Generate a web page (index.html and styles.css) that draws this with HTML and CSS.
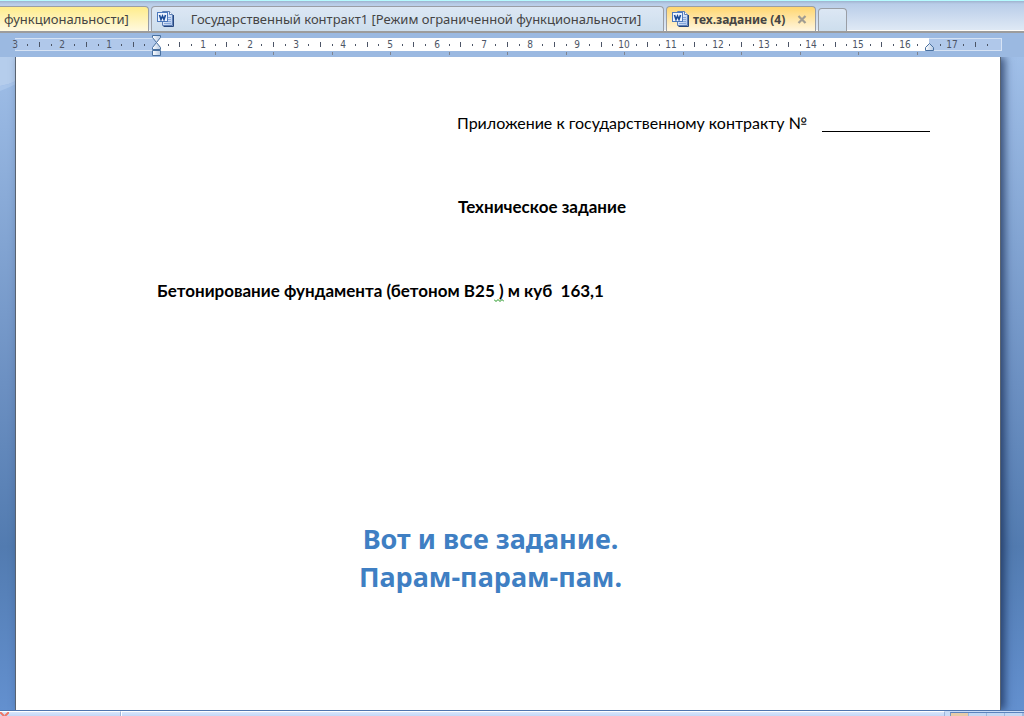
FILE: index.html
```html
<!DOCTYPE html>
<html lang="ru">
<head>
<meta charset="utf-8">
<title>тех.задание (4)</title>
<link rel="stylesheet" href="styles.css">
</head>
<body>
<svg class="defs" aria-hidden="true">
  <defs>
    <linearGradient id="paper" x1="0" y1="0" x2="1" y2="1"><stop offset="0" stop-color="#fff"/><stop offset="1" stop-color="#a9c3ec"/></linearGradient>
    <linearGradient id="knob" x1="0" y1="0" x2="1" y2="0"><stop offset="0" stop-color="#fff"/><stop offset="1" stop-color="#b4c8e2"/></linearGradient>
    <symbol id="word" viewBox="0 0 17 17">
      <path d="M5.5 .5h7l3 3v11h-10z" fill="url(#paper)" stroke="#5d7fb5"/>
      <path d="M12.5 .5v3h3" fill="#fff" stroke="#5d7fb5"/>
      <path d="M16.5 4v11.500h-10" fill="none" stroke="#27477f"/>
      <path d="M7 12.500h7M11 6.500h3M11 8.500h3M11 10.500h3" stroke="#86a7da"/>
      <rect x=".5" y="1.500" width="10" height="9" fill="#edf4ff" stroke="#4c79bd"/>
      <path d="M2.500 4l1.500 4.500L5.500 5l1.500 3.500L8.500 4" fill="none" stroke="#1c4c98" stroke-width="1.600"/>
    </symbol>
  </defs>
</svg>
<nav class="tabs">
  <button class="tab tab-first">функциональности]</button>
  <button class="tab tab-contract"><svg class="word"><use href="#word"/></svg><span>Государственный контракт1 [Режим ограниченной функциональности]</span></button>
  <button class="tab tab-active"><svg class="word"><use href="#word"/></svg><span>тех.задание (4)</span><svg class="close" viewBox="0 0 10 9"><path d="M1.500 1l7 7M8.500 1l-7 7" stroke="#a09c92" stroke-width="2.200"/></svg></button>
  <button class="tab tab-new" aria-label="Новая вкладка"></button>
</nav>
<div class="ruler"><svg id="ruler" class="ruler-scale"></svg></div>
<main class="workspace">
  <svg class="glow" viewBox="0 0 16 34"><path d="M0 0h16v24Q8 28 0 29z" fill="#b5cdec"/><path d="M0 29Q8 28 16 24v3Q8 31 0 34z" fill="#a9c5ea"/></svg>
  <article class="page">
    <p class="appendix"><span>Приложение к государственному контракту №</span><span class="blank"></span></p>
    <h1 class="title">Техническое задание</h1>
    <p class="task">Бетонирование фундамента (бетоном В25<span class="grammar"> )<svg class="wave" viewBox="0 0 10 3"><path d="M0 .5l2 2 2-2 2 2 2-2 2 2" fill="none" stroke="#159015"/></svg></span> м куб&nbsp; 163,1</p>
    <p class="caption">Вот и все задание.<br>Парам-парам-пам.</p>
  </article>
</main>
<footer class="status">
  <div class="cell cell-proof"><svg class="proof" viewBox="0 0 9 4"><path d="M0 0l4 4M9 0L5 4" stroke="#ef7666" stroke-width="2"/></svg></div>
  <div class="cell cell-main"></div>
  <div class="views"><i class="view view-on"></i><i class="view"></i><i class="view"></i><i class="view"></i></div>
</footer>
<script src="ruler.js"></script>
</body>
</html>
```

FILE: ruler.js
```js
const NS = "http://www.w3.org/2000/svg";
const ruler = document.getElementById("ruler");
const origin = 156, unit = 46.8, start = 15, end = 1002, margin = 929;

function add(name, attrs, text) {
  const node = document.createElementNS(NS, name);
  for (const key in attrs) node.setAttribute(key, attrs[key]);
  if (text !== undefined) node.textContent = text;
  ruler.appendChild(node);
}
function box(x, y, width, height, fill) {
  add("rect", { x, y, width, height, fill });
}

box(start, 5, end - start, 13, "#d6e3f5");
box(start, 6, end - start - 1, 11, "#b0c8ea");
box(origin, 5, margin - origin, 13, "#ffffff");

for (let q = -11; q <= 71; q++) {
  const x = Math.round(origin + q * unit / 4);
  if (q === 0 || q === 66) continue;
  if (q % 4 === 0) add("text", { x, y: 15, class: "ruler-number" }, Math.abs(q / 4));
  else if (q % 2 === 0) box(x, 9, 1, 5, "#4c5566");
  else box(x, 11, 1, 2, "#4c5566");
}
add("text", { x: 15, y: 15, class: "ruler-number" }, 3);
for (let i = 1; i <= 13; i++) box(Math.round(origin + i * 58.5), 19, 1, 3, "#7f8490");

const mark = { fill: "url(#knob)", stroke: "#49709f" };
add("path", { d: "M152.500 2.500h8v2l-4 5l4 5v2h-8v-2l4-5l-4-5z", ...mark });
add("path", { d: "M152.500 17.500h8v5h-8z", ...mark });
add("path", { d: "M925.500 17.500v-3l4-4l4 4v3z", ...mark });
```

FILE: styles.css
```css
* { box-sizing: border-box; }
body {
  margin: 0;
  height: 100vh;
  display: flex;
  flex-direction: column;
  overflow: hidden;
  background: #9bb9e1;
  font-family: "Noto Sans", sans-serif;
}
.defs { position: absolute; width: 0; height: 0; }

.tabs {
  flex: none;
  height: 33px;
  display: flex;
  align-items: flex-end;
  gap: 2px;
  padding-bottom: 2px;
  border-top: 1px solid #b6fbff;
  background: linear-gradient(#9fb3cf 0, #b9cde8 3px, #dfe9f5 29px, #fffdf8 29px, #fffdf8 30px, #9c9c9c 30px);
}
.tab {
  flex: none;
  height: 25px;
  display: flex;
  align-items: center;
  padding: 0 5px;
  border: 1px solid #9a9ea5;
  border-bottom: 0;
  border-radius: 4px 4px 0 0;
  background: linear-gradient(#dce7f4, #cddeed);
  color: #444;
  font: 13px "Noto Sans", sans-serif;
  white-space: nowrap;
}
.tab-first {
  width: 149px;
  padding-left: 4px;
  border-left: 0;
  border-top-left-radius: 0;
  background: linear-gradient(#ffed8c, #fff9df);
}
.tab-contract { width: 513px; }
.tab-contract span { flex: 1; text-align: center; }
.tab-active {
  width: 150px;
  gap: 4px;
  background: linear-gradient(#ffd66f, #fff6e0);
  font-size: 12px;
  font-weight: bold;
}
.tab-new { width: 29px; height: 23px; }
.word { flex: none; width: 17px; height: 17px; }
.close { width: 10px; height: 9px; margin-left: auto; margin-right: 3px; }

.ruler { flex: none; height: 24px; background: #9bb9e1; }
.ruler-scale { display: block; width: 100%; height: 24px; overflow: hidden; }
.ruler-number {
  font: 10px "DejaVu Sans Condensed", "DejaVu Sans", sans-serif;
  text-anchor: middle;
  fill: #4c5566;
}

.workspace {
  flex: 1;
  min-height: 0;
  position: relative;
  display: flex;
  overflow: hidden;
  padding: 0 23px 0 15px;
  background: linear-gradient(#a0bfe8 0, #6c90c2 50%, #527bb0 75%, #6390cf 100%);
}
.glow { position: absolute; left: 0; top: 0; width: 16px; height: 34px; }
.page {
  flex: 1;
  position: relative;
  padding: 52px 70px 0 141px;
  border: 1px solid #596370;
  border-width: 0 1px;
  background: #fff;
  box-shadow: 4px 0 8px rgba(20, 40, 80, .7);
  color: #000;
  font: 17px/28px Lato, sans-serif;
}
.page p, .title { margin: 0; }
.page .appendix {
  display: flex;
  justify-content: space-between;
  margin: 0 0 56px 300px;
  font-size: 16px;
  white-space: nowrap;
}
.blank { width: 108px; height: 23px; border-bottom: 1px solid #000; }
.page .title { margin: 0 0 56px 301px; font-size: 17px; font-weight: bold; }
.task { font-weight: bold; white-space: nowrap; }
.grammar { position: relative; }
.wave { position: absolute; right: 0; bottom: -1px; width: 10px; height: 3px; }
.page .caption {
  margin-top: 215px;
  padding-right: 106px;
  text-align: center;
  color: #3f7fc3;
  font: bold 27px/38px "Noto Sans", sans-serif;
}

.status {
  flex: none;
  height: 6px;
  display: flex;
  border-top: 1px solid #4f75ae;
  background: #c9dcf7;
}
.cell {
  border-top: 1px solid #fff;
  border-right: 1px solid #9cb5dc;
  background: linear-gradient(#d9e6fb, #c3d7f6);
}
.cell-proof { width: 121px; }
.cell-main { flex: 1; border-left: 1px solid #fff; }
.proof { display: block; width: 9px; height: 4px; }
.views {
  width: 74px;
  margin: 1px 0 0 5px;
  display: flex;
  gap: 1px;
  border-top: 1px solid #5a82bd;
  border-left: 1px solid #7897c4;
  background: #9db9df;
}
.view { width: 17px; background: #c3d7f3; }
.view-on { background: #e8cba8; }
```
